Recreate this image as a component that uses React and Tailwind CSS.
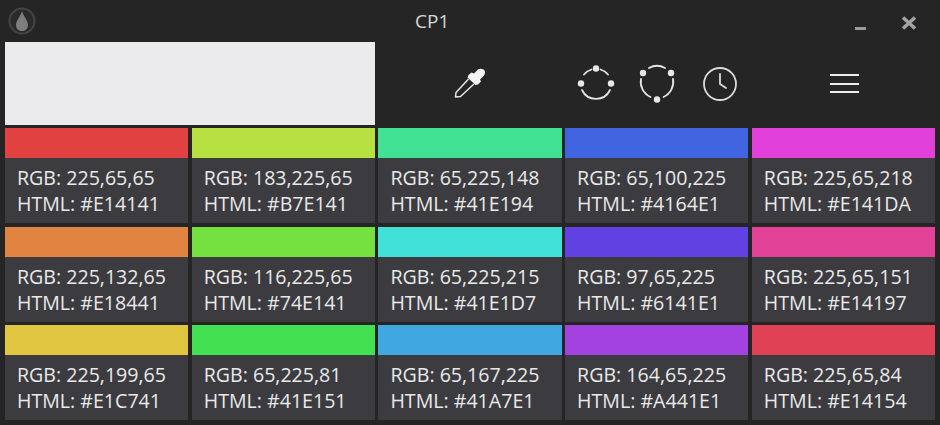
const colors = [
  { bg: "bg-[#e14141]", rgb: "225,65,65", html: "#E14141" },
  { bg: "bg-[#b7e141]", rgb: "183,225,65", html: "#B7E141" },
  { bg: "bg-[#41e194]", rgb: "65,225,148", html: "#41E194" },
  { bg: "bg-[#4164e1]", rgb: "65,100,225", html: "#4164E1" },
  { bg: "bg-[#e141da]", rgb: "225,65,218", html: "#E141DA" },
  { bg: "bg-[#e18441]", rgb: "225,132,65", html: "#E18441" },
  { bg: "bg-[#74e141]", rgb: "116,225,65", html: "#74E141" },
  { bg: "bg-[#41e1d7]", rgb: "65,225,215", html: "#41E1D7" },
  { bg: "bg-[#6141e1]", rgb: "97,65,225", html: "#6141E1" },
  { bg: "bg-[#e14197]", rgb: "225,65,151", html: "#E14197" },
  { bg: "bg-[#e1c741]", rgb: "225,199,65", html: "#E1C741" },
  { bg: "bg-[#41e151]", rgb: "65,225,81", html: "#41E151" },
  { bg: "bg-[#41a7e1]", rgb: "65,167,225", html: "#41A7E1" },
  { bg: "bg-[#a441e1]", rgb: "164,65,225", html: "#A441E1" },
  { bg: "bg-[#e14154]", rgb: "225,65,84", html: "#E14154" },
];

function Logo() {
  return (
    <svg width="28" height="28" viewBox="0 0 28 28">
      <circle cx="14" cy="14" r="12.5" fill="#2a2a2a" stroke="#454545" strokeWidth="2" />
      <path d="M14 4 C15 9 20 13 20 18 C20 22 17 24 14 24 C11 24 8 22 8 18 C8 13 13 9 14 4 Z" fill="#7d7d7d" />
    </svg>
  );
}

function Eyedropper() {
  return (
    <svg width="32" height="32" viewBox="0 0 32 32" fill="none">
      <path d="M20 5.5 L24 1.5 C26.5 0 29.5 0.8 30.8 3 C31.5 5 30.5 7.5 28.5 9 L26 11.5 L27 13.5 L24 16.5 L21.5 17 L13.5 9.5 L14.5 7 L17.5 4.5 Z" fill="#f2f2f2" />
      <path d="M14.5 11 L2 24.5 L1.5 29 L6.5 28.5 L20 16" stroke="#e6e6e6" strokeWidth="1.5" strokeLinejoin="round" />
    </svg>
  );
}

function RingThree() {
  return (
    <svg width="38" height="38" viewBox="0 0 38 38" fill="none">
      <g stroke="#e4e4e4" strokeWidth="1.8" strokeLinecap="round">
        <path d="M23.5 4.5 A15.5 15.5 0 0 1 31 9.5" />
        <path d="M14.5 4.5 A15.5 15.5 0 0 0 7 9.5" />
        <path d="M5 25 A15.5 15.5 0 0 0 33 25" />
      </g>
      <g fill="#e8e8e8">
        <circle cx="19" cy="3.5" r="3.2" />
        <circle cx="4" cy="18.5" r="3.2" />
        <circle cx="34" cy="18.5" r="3.2" />
      </g>
    </svg>
  );
}

function RingTwo() {
  return (
    <svg width="38" height="40" viewBox="0 0 38 40" fill="none">
      <g stroke="#e4e4e4" strokeWidth="1.8" strokeLinecap="round">
        <path d="M11 4 A16.5 16.5 0 0 1 27 4" />
        <path d="M3 15 A16.5 16.5 0 0 0 12.5 33" />
        <path d="M35 15 A16.5 16.5 0 0 1 25.5 33" />
      </g>
      <g fill="#e8e8e8">
        <circle cx="5" cy="9" r="3.2" />
        <circle cx="33" cy="9" r="3.2" />
        <circle cx="19" cy="35.5" r="3.2" />
      </g>
    </svg>
  );
}

function Clock() {
  return (
    <svg width="36" height="36" viewBox="0 0 36 36" fill="none" stroke="#dcdcdc" strokeWidth="1.8" strokeLinecap="round" strokeLinejoin="round">
      <circle cx="18" cy="18" r="16" />
      <path d="M18 8 V18 L24 22" />
    </svg>
  );
}

function MenuLines() {
  return (
    <div className="flex w-[29px] flex-col gap-[6.5px]">
      <div className="h-[2px] bg-[#eeeeee]" />
      <div className="h-[2px] bg-[#eeeeee]" />
      <div className="h-[2px] bg-[#eeeeee]" />
    </div>
  );
}

function ColorCard({ bg, rgb, html }) {
  return (
    <div className="flex h-[95px] flex-col bg-[#3b3b40]">
      <div className={`h-[30px] ${bg}`} />
      <div className="px-3 pt-[7px] text-[19.6px] leading-[26px] whitespace-nowrap text-[#e9e9e9]">
        <div>RGB: {rgb}</div>
        <div>HTML: {html}</div>
      </div>
    </div>
  );
}

export default function App() {
  return (
    <div className="h-[425px] w-[940px] overflow-hidden bg-[#252525] font-['Open_Sans',sans-serif]">
      <div className="flex h-[42px] items-center pl-2">
        <Logo />
        <div className="ml-[379px] w-[36px] text-[19px] leading-none whitespace-nowrap text-[#d8d8d8]">CP1</div>
        <div className="ml-[404px] mt-[14px] h-[3px] w-[11px] bg-[#9a9a9f]" />
        <svg className="ml-[35px] mt-[3px]" width="16" height="14" viewBox="0 0 16 14">
          <path d="M2 1.5 L14 12.5 M14 1.5 L2 12.5" stroke="#a3a3a8" strokeWidth="3.6" />
        </svg>
      </div>

      <div className="flex h-[83px] items-center pl-[5px]">
        <div className="h-[83px] w-[370px] bg-[#ebebed]" />
        <div className="ml-[79px]">
          <Eyedropper />
        </div>
        <div className="ml-[91px]">
          <RingThree />
        </div>
        <div className="ml-[23px]">
          <RingTwo />
        </div>
        <div className="ml-[26px]">
          <Clock />
        </div>
        <div className="ml-[92px]">
          <MenuLines />
        </div>
      </div>

      <div className="mt-[3px] grid grid-cols-5 gap-x-[3.5px] gap-y-[3.5px] px-[5px]">
        {colors.map((c) => (
          <ColorCard key={c.html} {...c} />
        ))}
      </div>
    </div>
  );
}
